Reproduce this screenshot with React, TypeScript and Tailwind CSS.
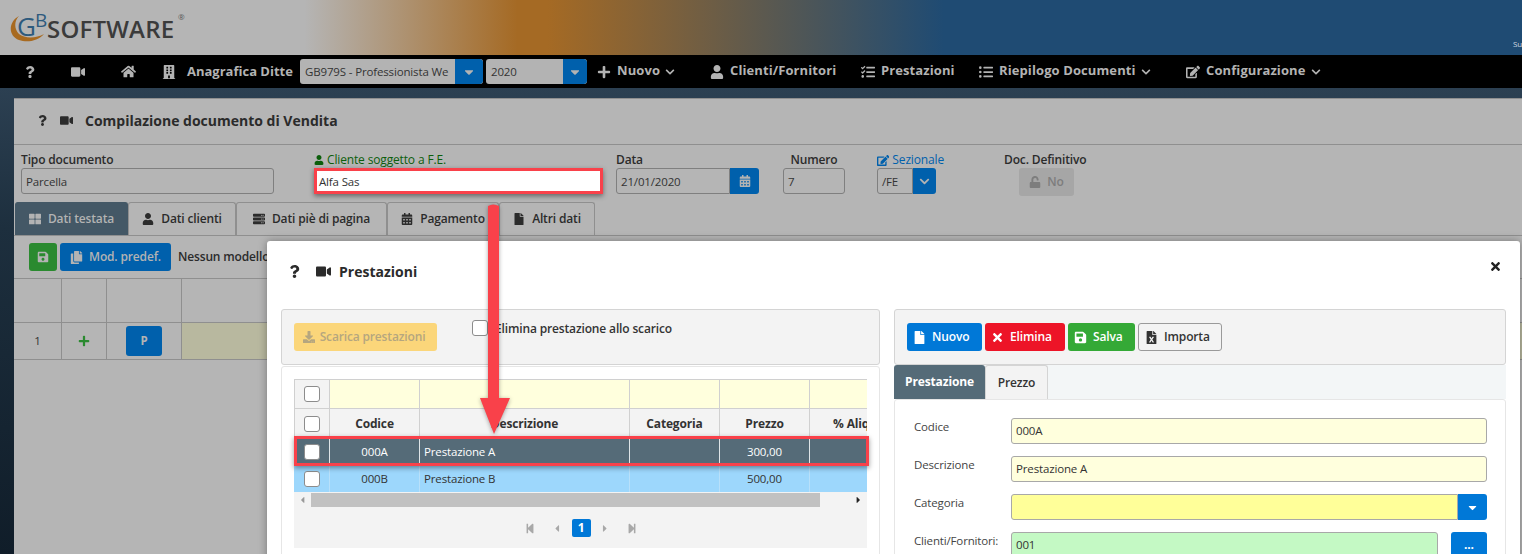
import {
  FaQuestion, FaVideo, FaHome, FaBuilding, FaPlus, FaChevronDown, FaUser, FaTasks, FaListUl, FaEdit,
  FaCalendarAlt, FaThLarge, FaServer, FaFile, FaSave, FaCopy, FaUnlock, FaDownload, FaTimes, FaFileExcel,
  FaCaretDown, FaStepBackward, FaStepForward, FaCaretLeft, FaCaretRight,
} from 'react-icons/fa'
import type { ReactNode } from 'react'

const font = { fontFamily: '"Open Sans", "Liberation Sans", sans-serif' }

function NavItem({ icon, label, chevron, className }: { icon: ReactNode; label: string; chevron?: boolean; className: string }) {
  return (
    <div className={`flex items-center text-[13px] font-bold tracking-[0.1px] text-[#b3b3b3] ${className}`}>
      <span className="flex w-[15px] justify-center text-[14px]">{icon}</span>
      <span className="ml-[6px] mt-[-2px] whitespace-nowrap">{label}</span>
      {chevron && <FaChevronDown className="ml-[5px] text-[10px]" />}
    </div>
  )
}

function Logo() {
  return (
    <div className="relative ml-[10px] mt-[10px] h-[34px] w-[180px]">
      <svg className="absolute left-0 top-0" width="48" height="34" viewBox="0 0 48 34">
        <path d="M9 6 C-2 12 -2 26 9 30 C17 33 28 31 34 24 C27 28 15 29 9 24 C4 19 4 11 9 6 Z" fill="#a86a20" />
      </svg>
      <span className="absolute left-[7px] top-[1px] text-[26px] leading-[30px] text-[#2d5a7d]">G</span>
      <span className="absolute left-[25px] top-[-3px] text-[19px] leading-[26px] text-[#2d5a7d]">B</span>
      <span className="absolute left-[37px] top-[4px] text-[24px] font-semibold leading-[30px] tracking-[0.2px] text-[#3b3b3b]">SOFTWARE</span>
      <span className="absolute left-[168px] top-[2px] text-[8px] leading-[10px] text-[#555]">®</span>
    </div>
  )
}

function TopNav() {
  return (
    <nav className="flex h-[33px] items-center bg-black">
      <FaQuestion className="ml-[24px] text-[12px] text-[#b3b3b3]" />
      <FaVideo className="ml-[35px] text-[14px] text-[#b3b3b3]" />
      <FaHome className="ml-[36px] text-[15px] text-[#b3b3b3]" />
      <FaBuilding className="ml-[26px] text-[14px] text-[#b3b3b3]" />
      <span className="ml-[11px] w-[113px] whitespace-nowrap text-[13px] font-bold tracking-normal text-[#b3b3b3]">Anagrafica Ditte</span>
      <div className="flex h-[25px] w-[183px] overflow-hidden rounded-[3px] bg-[#b3b3b3]">
        <span className="flex-1 overflow-hidden whitespace-nowrap pl-[5px] text-[11.5px] leading-[25px] text-[#333]">GB979S - Professionista We</span>
        <span className="flex w-[28px] items-center justify-center rounded-r-[3px] bg-[#0060ac] text-[14px] text-[#b3b3b3]"><FaCaretDown /></span>
      </div>
      <div className="ml-[3px] flex h-[25px] w-[101px] overflow-hidden rounded-[3px] bg-[#b3b3b3]">
        <span className="flex-1 pl-[5px] text-[11.5px] leading-[26px] text-[#333]">2020</span>
        <span className="flex w-[24px] items-center justify-center rounded-r-[3px] bg-[#0060ac] text-[14px] text-[#b3b3b3]"><FaCaretDown /></span>
      </div>
      <NavItem icon={<FaPlus />} label="Nuovo" chevron className="ml-[9px] w-[113px]" />
      <NavItem icon={<FaUser />} label="Clienti/Fornitori" className="w-[151px]" />
      <NavItem icon={<FaTasks />} label="Prestazioni" className="w-[118px]" />
      <NavItem icon={<FaListUl />} label="Riepilogo Documenti" chevron className="w-[207px]" />
      <NavItem icon={<FaEdit />} label="Configurazione" chevron className="" />
    </nav>
  )
}

function Field({ label, labelClass, className, children }: { label: ReactNode; labelClass?: string; className: string; children: ReactNode }) {
  return (
    <div className={className}>
      <div className={`h-[16px] whitespace-nowrap text-[12px] leading-[16px] ${labelClass ?? 'font-semibold text-[#2b2b2b]'}`}>{label}</div>
      {children}
    </div>
  )
}

const dimInput = 'flex h-[26px] items-center rounded-[3px] border border-[#7f7f7f] bg-[#b5b5b5] pl-[4px] pt-[1px] text-[11.5px] text-[#333]'

function DocTab({ icon, label, active, className }: { icon: ReactNode; label: string; active?: boolean; className: string }) {
  return (
    <div className={`flex h-[33px] items-center justify-center gap-[7px] rounded-t-[3px] border border-b-0 text-[12px] font-semibold ${active ? 'border-[#445866] bg-[#445866] text-[#b3b3b3]' : 'border-[#8f8f8f] bg-[#b5b5b5] text-[#2b2b2b]'} ${className}`}>
      <span className="text-[12px]">{icon}</span>
      {label}
    </div>
  )
}

function Background() {
  return (
    <div className="flex-1 bg-[linear-gradient(180deg,#2c4052_0%,#1d2f3e_30%,#101d29_100%)] pl-[14px] pt-[10px]">
      <div className="h-full border-t border-[#8f8f8f] bg-[#b5b5b5]">
        <div className="flex h-[46px] items-center border-b border-[#8f8f8f] pb-[2px] pl-[23px] text-[14px] font-bold tracking-normal text-[#2b2b2b]">
          <FaQuestion className="text-[11px]" />
          <FaVideo className="ml-[12px] text-[13px]" />
          <span className="ml-[12px]">Compilazione documento di Vendita</span>
        </div>
        <div className="flex h-[57px] pl-[7px] pt-[7px]">
          <Field label="Tipo documento" className="w-[253px]">
            <div className={dimInput}>Parcella</div>
          </Field>
          <Field
            className="ml-[40px] w-[289px]"
            labelClass="text-[#0b5e0b]"
            label={<span className="flex items-center gap-[3px]"><FaUser className="text-[10px]" />Cliente soggetto a F.E.</span>}
          >
            <div className="flex h-[26px] items-center border-[3px] border-[#f9414a] bg-white pl-[2px] pt-[1px] text-[11.5px] text-[#333] shadow-[0_2px_5px_rgba(0,0,0,0.45)]">Alfa Sas</div>
          </Field>
          <Field label="Data" className="ml-[13px] w-[143px]">
            <div className="flex">
              <div className={`${dimInput} flex-1 rounded-r-none`}>21/01/2020</div>
              <span className="flex w-[29px] items-center justify-center rounded-r-[3px] bg-[#0060ac] text-[12px] text-[#b3b3b3]"><FaCalendarAlt /></span>
            </div>
          </Field>
          <Field label="Numero" labelClass="text-center font-semibold text-[#2b2b2b]" className="ml-[24px] w-[62px]">
            <div className={dimInput}>7</div>
          </Field>
          <Field
            className="ml-[32px] w-[67px]"
            labelClass="text-[#0060ac]"
            label={<span className="flex items-center gap-[3px]"><FaEdit className="text-[13px]" />Sezionale</span>}
          >
            <div className="flex w-[59px]">
              <div className={`${dimInput} flex-1 rounded-r-none`}>/FE</div>
              <span className="flex w-[23px] items-center justify-center rounded-r-[3px] bg-[#0060ac] text-[11px] text-[#b3b3b3]"><FaChevronDown /></span>
            </div>
          </Field>
          <Field label="Doc. Definitivo" className="ml-[60px] w-[85px]">
            <div className="ml-[15px] flex h-[28px] w-[55px] items-center justify-center gap-[6px] rounded-[3px] bg-[#a6a6a6] text-[12px] font-semibold text-[#7d7d7d]">
              <FaUnlock className="text-[12px]" />No
            </div>
          </Field>
        </div>
        <div className="flex border-b border-[#8f8f8f] pl-[1px]">
          <DocTab active icon={<FaThLarge />} label="Dati testata" className="w-[113px]" />
          <DocTab icon={<FaUser />} label="Dati clienti" className="w-[108px]" />
          <DocTab icon={<FaServer />} label="Dati piè di pagina" className="w-[151px]" />
          <DocTab icon={<FaCalendarAlt />} label="Pagamento" className="w-[112px]" />
          <DocTab icon={<FaFile />} label="Altri dati" className="w-[96px]" />
        </div>
        <div className="flex items-center pl-[15px] pt-[7px]">
          <span className="flex h-[28px] w-[28px] items-center justify-center rounded-[3px] bg-[#2a8a2f] text-[12px] text-[#b3b3b3]"><FaSave /></span>
          <span className="ml-[3px] flex h-[28px] w-[111px] items-center justify-center gap-[6px] rounded-[3px] bg-[#0060ac] text-[12px] font-semibold text-[#b3b3b3]">
            <FaCopy className="text-[13px]" />Mod. predef.
          </span>
          <span className="ml-[7px] whitespace-nowrap text-[12px] font-semibold text-[#2b2b2b]">Nessun modello</span>
        </div>
        <div className="mt-[7px] grid grid-cols-[48px_45px_75px_1fr] text-[11.5px] text-[#333]">
          <div className="h-[45px] border-y border-r border-[#8f8f8f]" />
          <div className="h-[45px] border-y border-r border-[#8f8f8f]" />
          <div className="h-[45px] border-y border-r border-[#8f8f8f]" />
          <div className="h-[45px] border-y border-[#8f8f8f]" />
          <div className="flex h-[37px] items-center justify-center border-b border-r border-[#8f8f8f]">1</div>
          <div className="flex h-[37px] items-center justify-center border-b border-r border-[#8f8f8f] text-[12px] text-[#2a8a2f]"><FaPlus /></div>
          <div className="flex h-[37px] items-center justify-center border-b border-r border-[#8f8f8f]">
            <span className="flex h-[30px] w-[36px] items-center justify-center rounded-[3px] bg-[#0060ac] font-bold text-[#b3b3b3]">P</span>
          </div>
          <div className="h-[37px] border-b border-[#8f8f8f] bg-[#b8b89f]" />
        </div>
      </div>
    </div>
  )
}

function Check() {
  return <span className="h-[16px] w-[16px] rounded-[3px] border border-[#8c8c8c] bg-white" />
}

const gridCols = 'grid grid-cols-[36px_90px_210px_90px_90px_57px]'

function ListRow({ cells, className, cellClass }: { cells: string[]; className: string; cellClass: string }) {
  return (
    <div className={`${gridCols} ${className}`}>
      <div className={`flex items-center justify-center border-r ${cellClass}`}><Check /></div>
      <div className={`flex items-center justify-center border-r ${cellClass}`}>{cells[0]}</div>
      <div className={`flex items-center border-r pl-[4px] ${cellClass}`}>{cells[1]}</div>
      <div className={`border-r ${cellClass}`} />
      <div className={`flex items-center justify-center border-r ${cellClass}`}>{cells[2]}</div>
      <div />
    </div>
  )
}

function ServicesList() {
  return (
    <div className="w-[599px]">
      <div className="flex h-[56px] rounded-[3px] border border-[#d4d4d4] bg-[#f3f3f3] pl-[12px] pt-[13px]">
        <span className="flex h-[28px] w-[143px] items-center justify-center gap-[5px] rounded-[3px] bg-[#fbd67a] pr-[3px] text-[12px] font-semibold text-[#b5a67f]">
          <FaDownload className="text-[12px]" />Scarica prestazioni
        </span>
        <div className="ml-[35px] mt-[-3px] flex items-start gap-[7px]">
          <Check />
          <span className="text-[12px] font-semibold text-[#333]">Elimina prestazione allo scarico</span>
        </div>
      </div>
      <div className="mt-[1px] h-[300px] rounded-[3px] border border-[#e6e6e6] px-[12px] pt-[12px]">
        <div className="relative w-[575px]">
          <div className="w-[573px] overflow-hidden">
            <div className="border-t border-[#d0d0d0]">
              <div className={`${gridCols} h-[29px]`}>
                <div className="flex items-center justify-center border-x border-b border-[#d0d0d0] bg-[#f3f3f3]"><Check /></div>
                <div className="border-b border-r border-[#d0d0d0] bg-[#ffffdd]" />
                <div className="border-b border-r border-[#d0d0d0] bg-[#ffffdd]" />
                <div className="border-b border-r border-[#d0d0d0] bg-[#ffffdd]" />
                <div className="border-b border-r border-[#d0d0d0] bg-[#ffffdd]" />
                <div className="border-b border-[#d0d0d0] bg-[#ffffdd]" />
              </div>
              <div className={`${gridCols} h-[29px] bg-[#f3f3f3] text-[12px] font-bold text-[#333]`}>
                <div className="flex items-center justify-center border-x border-[#d0d0d0]"><Check /></div>
                <div className="flex items-center justify-center border-r border-[#d0d0d0]">Codice</div>
                <div className="flex items-center justify-center border-r border-[#d0d0d0]">Descrizione</div>
                <div className="flex items-center justify-center border-r border-[#d0d0d0]">Categoria</div>
                <div className="flex items-center justify-center border-r border-[#d0d0d0]">Prezzo</div>
                <div className="flex items-center whitespace-nowrap pl-[23px]">% Aliquota</div>
              </div>
              <ListRow cells={['000A', 'Prestazione A', '300,00']} className="h-[27px] bg-[#556b78] text-[11.5px] text-white" cellClass="border-[#dfe5e8]" />
              <ListRow cells={['000B', 'Prestazione B', '500,00']} className="h-[27px] bg-[#9dd7fc] text-[11.5px] text-[#333]" cellClass="border-[#b8e0fa]" />
            </div>
            <div className="flex h-[16px] items-center bg-[#f3f3f3] text-[10px]">
              <FaCaretLeft className="w-[17px] text-[#999]" />
              <span className="h-[14px] w-[510px] bg-[#c1c1c1]" />
              <FaCaretRight className="ml-[30px] w-[17px] text-[#222]" />
            </div>
            <div className="flex h-[40px] items-center justify-center bg-[#f3f3f3] text-[11px] text-[#a8a8a8]">
              <FaStepBackward className="w-[12px]" />
              <FaCaretLeft className="ml-[15px] w-[12px]" />
              <span className="ml-[9px] flex h-[18px] w-[19px] items-center justify-center rounded-[2px] bg-[#0078d7] text-[12px] font-bold text-white">1</span>
              <FaCaretRight className="ml-[8px] w-[12px]" />
              <FaStepForward className="ml-[15px] w-[12px]" />
            </div>
          </div>
          <div className="pointer-events-none absolute left-0 top-[57px] h-[30px] w-full border-[3px] border-[#f9414a] shadow-[0_2px_5px_rgba(0,0,0,0.4)]" />
        </div>
      </div>
    </div>
  )
}

function ActionButton({ icon, label, className }: { icon: ReactNode; label: string; className: string }) {
  return (
    <span className={`flex h-[28px] items-center rounded-[3px] text-[12px] font-semibold ${className}`}>
      <span className="flex w-[25px] justify-center text-[13px]">{icon}</span>
      {label}
    </span>
  )
}

function FormRow({ label, children }: { label: string; children: ReactNode }) {
  return (
    <div className="mb-[12px] flex">
      <span className="w-[97px] pt-[1px] text-[11.5px] leading-[16px] text-[#444]">{label}</span>
      {children}
    </div>
  )
}

const formInput = 'flex h-[26px] w-[476px] items-center rounded-[3px] border border-[#a8a8a8] pl-[4px] text-[11.5px] text-[#333]'

function ServiceDetail() {
  return (
    <div className="ml-[14px] w-[612px]">
      <div className="flex h-[56px] gap-[3px] rounded-[3px] border border-[#d4d4d4] bg-[#f3f3f3] pl-[12px] pt-[13px]">
        <ActionButton icon={<FaFile />} label="Nuovo" className="w-[75px] bg-[#0078d7] text-white" />
        <ActionButton icon={<FaTimes />} label="Elimina" className="w-[80px] bg-[#ed1427] text-white" />
        <ActionButton icon={<FaSave />} label="Salva" className="w-[67px] bg-[#34a936] text-white" />
        <ActionButton icon={<FaFileExcel />} label="Importa" className="w-[84px] border border-[#9a9a9a] bg-[#f3f3f3] text-[#333]" />
      </div>
      <div className="flex h-[34px] bg-[#f3f6f7]">
        <span className="flex w-[91px] items-center justify-center rounded-t-[3px] bg-[#556b78] text-[12px] font-bold text-white">Prestazione</span>
        <span className="flex w-[63px] items-center justify-center rounded-t-[3px] border border-b-0 border-[#d4d4d4] bg-[#f3f3f3] text-[12px] font-semibold text-[#333]">Prezzo</span>
      </div>
      <div className="h-[200px] rounded-[3px] border border-[#e6e6e6] pl-[19px] pt-[18px]">
        <FormRow label="Codice"><div className={`${formInput} bg-[#ffffdd]`}>000A</div></FormRow>
        <FormRow label="Descrizione"><div className={`${formInput} bg-[#ffffdd]`}>Prestazione A</div></FormRow>
        <FormRow label="Categoria">
          <div className="flex h-[26px] w-[476px]">
            <div className="flex-1 rounded-l-[3px] border border-[#a8a8a8] bg-[#ffff99]" />
            <span className="flex w-[29px] items-center justify-center rounded-r-[3px] bg-[#0078d7] text-[13px] text-white"><FaCaretDown /></span>
          </div>
        </FormRow>
        <FormRow label="Clienti/Fornitori:">
          <div className="flex w-[476px] justify-between">
            <div className="flex h-[26px] w-[427px] items-center rounded-[3px] border border-[#a8a8a8] bg-[#c4f9c4] pl-[4px] text-[11.5px] text-[#333]">001</div>
            <span className="flex h-[26px] w-[36px] items-center justify-center rounded-[3px] bg-[#0078d7] text-[12px] font-bold text-white">...</span>
          </div>
        </FormRow>
      </div>
    </div>
  )
}

function Modal() {
  return (
    <div className="absolute left-[267px] top-[241px] h-[330px] w-[1253px] rounded-[3px] bg-white shadow-[0_0_8px_rgba(0,0,0,0.35)]">
      <div className="relative flex h-[68px] items-center pb-[8px] pl-[21px] text-[14px] font-bold tracking-normal text-[#2b2b2b]">
        <FaQuestion className="text-[13px]" />
        <FaVideo className="ml-[15px] text-[15px]" />
        <span className="ml-[8px]">Prestazioni</span>
        <FaTimes className="absolute right-[18px] top-[19px] text-[13px] text-[#222]" />
      </div>
      <div className="flex pl-[14px]">
        <ServicesList />
        <ServiceDetail />
      </div>
    </div>
  )
}

function Arrow() {
  return (
    <svg className="absolute left-[475px] top-[203px]" width="40" height="236" viewBox="0 0 40 236">
      <path d="M13 3 Q18 0 24 3 L24 195 L35 195 L19 231 L5 195 L13 195 Z" fill="#f9414a" style={{ filter: 'drop-shadow(0 1px 2px rgba(0,0,0,0.35))' }} />
    </svg>
  )
}

export default function App() {
  return (
    <div className="relative flex h-[554px] w-[1522px] flex-col overflow-hidden tracking-[-0.15px]" style={font}>
      <header className="relative h-[55px] bg-[linear-gradient(90deg,#b5b5b5_0%,#b5b5b5_20%,#a56a24_34%,#a56a24_36%,#1f4b73_62%,#1f4b73_100%)]">
        <Logo />
        <span className="absolute right-0 top-[38px] text-[8px] text-[#cfd8e0]">Su</span>
      </header>
      <TopNav />
      <Background />
      <Modal />
      <Arrow />
    </div>
  )
}
